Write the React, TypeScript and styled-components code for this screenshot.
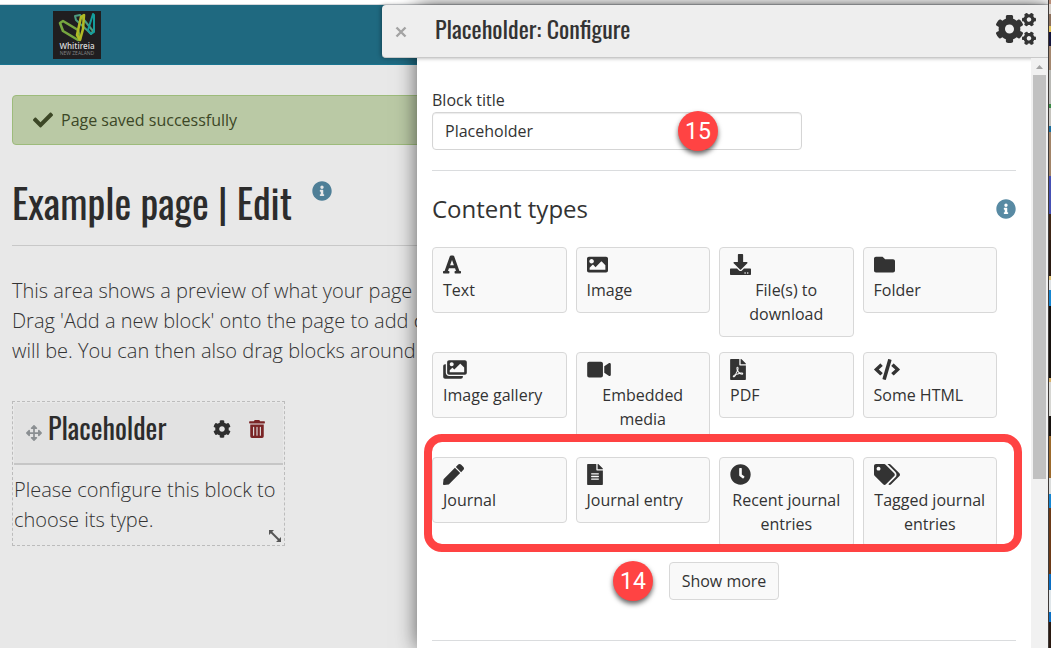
import React from 'react';
import styled, { createGlobalStyle } from 'styled-components';
import {
  FaArrowsAlt,
  FaCheck,
  FaClock,
  FaCode,
  FaCog,
  FaCogs,
  FaDownload,
  FaFileAlt,
  FaFilePdf,
  FaFolder,
  FaFont,
  FaImage,
  FaImages,
  FaInfoCircle,
  FaPen,
  FaTags,
  FaTrashAlt,
  FaVideo,
} from 'react-icons/fa';

const GlobalStyle = createGlobalStyle`
  *, *::before, *::after { box-sizing: border-box; }
  body {
    margin: 0;
    background: #e8e8e8;
    color: #333;
    font-family: "Open Sans", sans-serif;
    font-size: 16px;
    line-height: 24px;
  }
  h1, h2, h3, p { margin: 0; }
  button, input { font: inherit; color: inherit; }
`;

const headingFont = `"Oswald", "Liberation Sans Narrow", "Arial Narrow", sans-serif`;

const Page = styled.div`
  position: relative;
  min-height: 100vh;
  overflow: hidden;
`;

const BrowserEdge = styled.div`
  height: 5px;
  background: #fff;
  border-bottom: 1px solid #d4d7db;
`;

const SiteHeader = styled.header`
  height: 60px;
  padding: 6px 53px;
  background: #1f6980;
  border-bottom: 1px solid #1a7590;
`;

const LogoLink = styled.a`
  display: block;
  width: 48px;
  height: 48px;
`;

const Main = styled.main`
  padding: 30px 12px 0;
`;

const Alert = styled.div`
  display: flex;
  align-items: center;
  gap: 8px;
  height: 50px;
  padding: 0 20px;
  border: 1px solid #9dbb7b;
  border-radius: 4px;
  background: #bac9a5;
  color: #3c4726;

  svg { height: 20px; width: 20px; }
`;

const TitleRow = styled.div`
  display: flex;
  align-items: flex-start;
  gap: 20px;
  margin-top: 30px;
  padding-bottom: 16px;
  border-bottom: 1px solid #c8c8c8;
`;

const PageTitle = styled.h1`
  font-family: ${headingFont};
  font-size: 40px;
  font-weight: 400;
  line-height: 54px;
  color: #2c2c2c;
  white-space: nowrap;
`;

const InfoButton = styled.button<{ $inTitle?: boolean }>`
  display: flex;
  padding: 0;
  margin-top: ${(p) => (p.$inTitle ? 6 : 0)}px;
  border: 0;
  background: none;
  color: ${(p) => (p.$inTitle ? '#4f7f97' : '#588aa3')};

  svg { width: 20px; height: 20px; }
`;

const Lead = styled.p`
  margin-top: 30px;
  font-size: 20px;
  font-weight: 300;
  line-height: 30px;
  white-space: nowrap;
`;

const Block = styled.section`
  position: relative;
  width: 273px;
  margin-top: 35px;
  padding: 1px;
  border: 1px dashed #bcbcbc;
`;

const BlockHead = styled.header`
  display: flex;
  align-items: center;
  height: 62px;
  padding: 0 17px 8px 12px;
  border-bottom: 2px solid #c6c6c6;
  background: #e2e2e2;
`;

const BlockTitle = styled.h3`
  flex: 1;
  margin-left: 6px;
  padding-bottom: 2px;
  font-family: ${headingFont};
  font-size: 28px;
  font-weight: 400;
  line-height: 40px;
  color: #2c2c2c;
`;

const MoveHandle = styled.span`
  display: flex;
  padding-top: 8px;
  color: #8b8f92;

  svg { width: 16px; height: 16px; }
`;

const BlockAction = styled.button<{ $danger?: boolean }>`
  display: flex;
  padding: 0;
  margin-left: 17px;
  border: 0;
  background: none;
  color: ${(p) => (p.$danger ? '#7a2526' : '#2e2e2e')};

  svg { width: 18px; height: 18px; }
`;

const BlockText = styled.p`
  padding: 10px 0 9px;
  font-size: 20px;
  font-weight: 300;
  line-height: 30px;
`;

const ResizeGrip = styled.svg`
  position: absolute;
  right: 3px;
  bottom: 3px;
`;

const Drawer = styled.aside`
  position: absolute;
  top: 5px;
  left: 417px;
  right: 3px;
  bottom: 0;
  display: flex;
  flex-direction: column;
  background: #fff;
  box-shadow: 0 0 20px rgba(0, 0, 0, 0.6);
`;

const DrawerHead = styled.header`
  display: flex;
  align-items: center;
  flex: none;
  height: 53px;
  margin-left: -35px;
  padding: 0 12px 4px;
  border-bottom: 1px solid #c9c9c9;
  border-radius: 4px 0 0 4px;
  background: #eee;
  box-shadow: -1px 0 4px rgba(0, 0, 0, 0.35);

  > svg { width: 40px; height: 32px; }
`;

const CloseButton = styled.button`
  display: flex;
  padding: 6px 0 0;
  margin-right: 27px;
  border: 0;
  background: none;
  color: #a3a3a3;
`;

const DrawerTitle = styled.h2`
  flex: 1;
  padding-bottom: 2px;
  font-family: ${headingFont};
  font-size: 24px;
  font-weight: 400;
  line-height: 36px;
`;

const DrawerBody = styled.div`
  display: flex;
  flex: 1;
  min-height: 0;
`;

const DrawerContent = styled.form`
  flex: 1;
  padding: 30px 15px 0;
  overflow: hidden;
`;

const Rule = styled.hr<{ $top: number }>`
  margin: ${(p) => p.$top}px 0 0;
  border: 0;
  border-top: 1px solid #dadcde;
`;

const Label = styled.label`
  display: block;
`;

const Field = styled.div`
  position: relative;
  width: 370px;
  max-width: 100%;
`;

const TextInput = styled.input`
  display: block;
  width: 100%;
  height: 38px;
  padding: 0 12px;
  border: 1px solid #d5d5d5;
  border-radius: 4px;
  background: #fff;
  box-shadow: inset 0 1px 1px rgba(0, 0, 0, 0.08);
`;

const SectionHead = styled.div`
  display: flex;
  align-items: center;
  justify-content: space-between;
  margin: 20px 0;
`;

const SectionTitle = styled.h3`
  font-size: 24px;
  font-weight: 400;
  line-height: 36px;
`;

const TypeGrid = styled.div`
  position: relative;
  display: grid;
  grid-template-columns: repeat(4, 1fr);
  gap: 15px 9px;
  align-items: start;
  margin-right: 19px;
`;

const buttonFace = `
  border: 1px solid #d8d8d8;
  border-radius: 4px;
  background: #f9f9f9;
`;

const TypeButton = styled.button`
  ${buttonFace}
  display: flex;
  flex-direction: column;
  align-items: flex-start;
  min-width: 0;
  padding: 6px 10px 10px;
  line-height: 24px;
  text-align: center;
`;

const TypeIcon = styled.span<{ $width: number }>`
  display: flex;
  height: 24px;

  svg { height: 21px; width: ${(p) => p.$width}px; }
`;

const RowHighlight = styled.div`
  position: absolute;
  left: -8px;
  right: -25px;
  bottom: -5px;
  height: 118px;
  border: 8px solid #ff4343;
  border-radius: 18px;
  pointer-events: none;
`;

const MoreRow = styled.div`
  position: relative;
  width: 110px;
  margin: 15px auto 0;
`;

const MoreButton = styled.button`
  ${buttonFace}
  width: 100%;
  height: 38px;
  padding: 0;
`;

const Marker = styled.span<{ $right: string }>`
  position: absolute;
  top: -1px;
  right: ${(p) => p.$right};
  width: 40px;
  height: 40px;
  border-radius: 50%;
  background: #ff4343;
  box-shadow: 0 3px 5px rgba(0, 0, 0, 0.6);
  color: #fff;
  font-family: Roboto, sans-serif;
  font-size: 23px;
  line-height: 42px;
  text-align: center;
`;

const ScrollTrack = styled.div`
  display: flex;
  flex-direction: column;
  align-items: center;
  width: 17px;
  background: #f1f1f1;

  svg { flex: none; }
`;

const ScrollThumb = styled.div`
  flex: 12;
  width: 13px;
  background: #c1c1c1;
`;

const ScrollRest = styled.div`
  flex: 5;
`;

const DesktopEdge = styled.div`
  position: absolute;
  top: 0;
  right: 0;
  bottom: 0;
  width: 3px;
  border-left: 1px solid #3f3a38;
  background: linear-gradient(
    #b98d78 0 4px, #d9d2cc 4px 14px, #8d705c 14px 26px, #e4c35c 26px 32px,
    #15153c 32px 46px, #a58870 46px 70px, #b9b9b5 70px 104px, #3a8a45 104px 108px,
    #c6c4be 108px 126px, #1b6f9e 126px 132px, #a28468 132px 176px, #4650b4 176px 214px,
    #402616 214px 240px, #2a1a12 240px 276px, #e3c476 276px 280px, #dfe3e6 280px 290px,
    #1586d2 290px 306px, #17120e 306px 378px, #d9b26a 378px 382px, #d6d6d2 382px 416px,
    #17120e 416px 436px, #9c6a2c 436px 478px, #dadcdb 478px 494px, #1586d2 494px 508px,
    #6d3a17 508px 574px, #0b6fc4 574px 590px, #dfe6ea 590px 612px, #0b6fc4 612px 622px,
    #2a1a12 622px
  );
`;

function Logo() {
  return (
    <svg width="48" height="48" viewBox="0 0 48 48" role="img" aria-label="Whitireia New Zealand">
      <rect width="48" height="48" fill="#201e20" />
      <g fill="none" strokeLinejoin="round" strokeLinecap="round">
        <path d="M22 5l5-1 13 16-2 3-3-3-12-11z" stroke="#4d9c80" strokeWidth="2" />
        <path d="M40 3l1 1v17l-3 2-3-4z" stroke="#159d9b" strokeWidth="2" />
        <path d="M7 12l3-2 15 9 2 9-2 1-15-9z" stroke="#76a63f" strokeWidth="2.600" />
        <path d="M28 6l3-2-1 14-3 11-3-5z" stroke="#b0ba25" strokeWidth="2.600" />
      </g>
      <text x="24" y="38" fill="#d8d8d8" fontFamily="Open Sans, sans-serif" fontSize="8" fontWeight="600" textAnchor="middle">
        Whitireia
      </text>
      <text x="24" y="44" fill="#858585" fontFamily="Open Sans, sans-serif" fontSize="5" textAnchor="middle">
        NEW ZEALAND
      </text>
    </svg>
  );
}

const types: { label: string; icon: React.ReactNode; width: number }[] = [
  { label: 'Text', icon: <FaFont />, width: 18 },
  { label: 'Image', icon: <FaImage />, width: 21 },
  { label: 'File(s) to download', icon: <FaDownload />, width: 21 },
  { label: 'Folder', icon: <FaFolder />, width: 21 },
  { label: 'Image gallery', icon: <FaImages />, width: 24 },
  { label: 'Embedded media', icon: <FaVideo />, width: 24 },
  { label: 'PDF', icon: <FaFilePdf />, width: 16 },
  { label: 'Some HTML', icon: <FaCode />, width: 26 },
  { label: 'Journal', icon: <FaPen />, width: 21 },
  { label: 'Journal entry', icon: <FaFileAlt />, width: 16 },
  { label: 'Recent journal entries', icon: <FaClock />, width: 21 },
  { label: 'Tagged journal entries', icon: <FaTags />, width: 26 },
];

export default function App() {
  return (
    <Page>
      <GlobalStyle />
      <BrowserEdge />
      <SiteHeader>
        <LogoLink href="#home"><Logo /></LogoLink>
      </SiteHeader>

      <Main>
        <Alert role="status"><FaCheck />Page saved successfully</Alert>
        <TitleRow>
          <PageTitle>Example page | Edit</PageTitle>
          <InfoButton $inTitle aria-label="Help for editing the page"><FaInfoCircle /></InfoButton>
        </TitleRow>
        <Lead>
          This area shows a preview of what your page<br />
          Drag 'Add a new block' onto the page to add c<br />
          will be. You can then also drag blocks around
        </Lead>
        <Block>
          <BlockHead>
            <MoveHandle><FaArrowsAlt /></MoveHandle>
            <BlockTitle>Placeholder</BlockTitle>
            <BlockAction aria-label="Configure block"><FaCog /></BlockAction>
            <BlockAction $danger aria-label="Remove block"><FaTrashAlt /></BlockAction>
          </BlockHead>
          <BlockText>Please configure this block to choose its type.</BlockText>
          <ResizeGrip width="12" height="12" viewBox="0 0 12 12" aria-hidden="true">
            <path d="M2 2l8 8" stroke="#555" strokeWidth="2" />
            <path d="M0 0h5L0 5zM12 12H7l5-5z" fill="#555" />
          </ResizeGrip>
        </Block>
      </Main>

      <Drawer>
        <DrawerHead>
          <CloseButton aria-label="Close">
            <svg width="14" height="14" viewBox="0 0 14 14" aria-hidden="true">
              <path d="M2.500 2.500l9 9m0-9l-9 9" stroke="currentColor" strokeWidth="2.400" />
            </svg>
          </CloseButton>
          <DrawerTitle>Placeholder: Configure</DrawerTitle>
          <FaCogs />
        </DrawerHead>
        <DrawerBody>
          <DrawerContent onSubmit={(e) => e.preventDefault()}>
            <Label htmlFor="block-title">Block title</Label>
            <Field>
              <TextInput id="block-title" type="text" defaultValue="Placeholder" />
              <Marker $right="84px">15</Marker>
            </Field>
            <Rule $top={20} />
            <SectionHead>
              <SectionTitle>Content types</SectionTitle>
              <InfoButton type="button" aria-label="Help for content types"><FaInfoCircle /></InfoButton>
            </SectionHead>
            <TypeGrid>
              {types.map((t) => (
                <TypeButton type="button" key={t.label}>
                  <TypeIcon $width={t.width}>{t.icon}</TypeIcon>
                  <span>{t.label}</span>
                </TypeButton>
              ))}
              <RowHighlight />
            </TypeGrid>
            <MoreRow>
              <Marker $right="calc(100% + 16px)">14</Marker>
              <MoreButton type="button">Show more</MoreButton>
            </MoreRow>
            <Rule $top={40} />
          </DrawerContent>
          <ScrollTrack>
            <svg width="17" height="17" viewBox="0 0 17 17" aria-hidden="true">
              <path d="M5 11l3.500-4 3.500 4z" fill="#a3a3a3" />
            </svg>
            <ScrollThumb />
            <ScrollRest />
          </ScrollTrack>
        </DrawerBody>
      </Drawer>
      <DesktopEdge />
    </Page>
  );
}
